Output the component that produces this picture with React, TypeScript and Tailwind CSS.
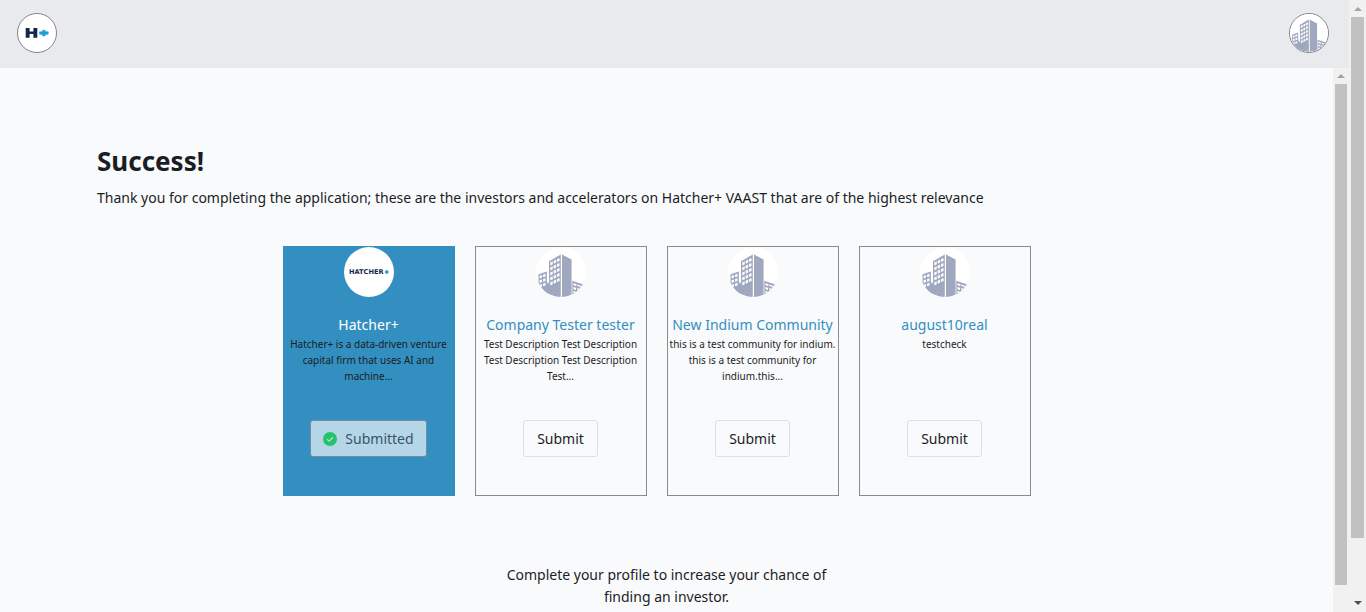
import React from "react";

type Investor = {
  name: string;
  description: string;
  submitted?: boolean;
};

const investors: Investor[] = [
  {
    name: "Hatcher+",
    description: "Hatcher+ is a data-driven venture capital firm that uses AI and machine...",
    submitted: true,
  },
  {
    name: "Company Tester tester",
    description: "Test Description Test Description Test Description Test Description Test...",
  },
  {
    name: "New Indium Community",
    description: "this is a test community for indium. this is a test community for indium.this...",
  },
  { name: "august10real", description: "testcheck" },
];

const towerRows = [0, 1, 2, 3, 4];
const towerCols = [0, 1, 2];
const annexRows = [0, 1, 2];
const annexCols = [0, 1];

function BuildingIcon({ id, className }: { id: string; className: string }) {
  return (
    <svg viewBox="0 0 50 50" className={className} aria-hidden="true">
      <clipPath id={id}>
        <circle cx="25" cy="25" r="25" />
      </clipPath>
      <circle cx="25" cy="25" r="25" fill="#fff" />
      <g clipPath={`url(#${id})`}>
        <g fill="#a0a8bf">
          <path d="M13 14.2 24.8 7.4V50H8V40l5-1.500z" />
          <path d="M26 7.400 35.600 12.400V50H26z" />
          <path d="M2.500 27.300 10.900 24.500V34.500L13.200 36.500V50L2.500 42z" />
          <path d="M36.300 33.800 47.400 37.400 46 39.600 44.500 39.300V43L36.300 50z" />
        </g>
        <g fill="#fff">
          {towerRows.map((r) =>
            towerCols.map((c) => {
              const x = 14.3 + c * 3.4;
              const y = 15.5 + r * 5 - c * 1.7;
              return <path key={`${r}-${c}`} d={`M${x} ${y}l2.400-1.200v3l-2.400 1.200z`} />;
            }),
          )}
          {annexRows.map((r) =>
            annexCols.map((c) => {
              const x = 3.6 + c * 3.5;
              const y = 28.7 + r * 4.5 - c * 1.2;
              return <path key={`${r}-${c}`} d={`M${x} ${y}l2.400-.8v2.700l-2.400.8z`} />;
            }),
          )}
          <path d="M11.300 24v11.500l1.300 1V24z" />
          <path d="M37.400 36.200l3 .9v2l-3-.9zM41.400 37.400l3.200 1v1.500l-3.200-.9zM37.400 40l2.600.8v2.200l-2.600-.8zM41.200 41l2.300.7v2l-2.300-.7zM37.400 44l2.600.8v2l-2.600-.8z" />
        </g>
      </g>
    </svg>
  );
}

function HatcherMark() {
  return (
    <svg viewBox="0 0 40 40" className="size-10" aria-hidden="true">
      <circle cx="20" cy="20" r="19.500" fill="#fff" stroke="#858689" />
      <path d="M8.700 15h3.900v3.400h3.800V15h3.900v9.700h-3.900v-3.600h-3.800v3.600H8.700z" fill="#14264a" />
      <path
        d="M25.600 17.200h2.600v1.600h3v2.500h-3v1.600h-2.600v-1.600h-3v-2.500h3z"
        fill="#1b9ddb"
        stroke="#1b9ddb"
        strokeWidth="0.600"
        strokeLinejoin="round"
      />
    </svg>
  );
}

function HatcherLogo() {
  return (
    <div className="flex size-[50px] items-center justify-center rounded-full bg-white">
      <svg viewBox="0 0 40 8" className="h-2 w-10" role="img" aria-label="Hatcher+">
        <text
          x="0"
          y="6"
          fontFamily="'DejaVu Sans', sans-serif"
          fontWeight="700"
          fontSize="6.600"
          fill="#14264a"
        >
          HATCHER
        </text>
        <path d="M36.900 2h1.600v1.200h1.200v1.600h-1.200V6h-1.600V4.800h-1.200V3.200h1.200z" fill="#1b9ddb" />
      </svg>
    </div>
  );
}

function CheckIcon() {
  return (
    <svg viewBox="0 0 14 14" className="size-3.5" aria-hidden="true">
      <circle cx="7" cy="7" r="7" fill="#22c36b" />
      <path d="M4 7.200 6.200 9.200 10 5.200" fill="none" stroke="#b5d6e7" strokeWidth="1.300" />
    </svg>
  );
}

function InvestorCard({ investor, index }: { investor: Investor; index: number }) {
  const { name, description, submitted } = investor;
  return (
    <article
      className={`flex h-[250px] w-[172px] flex-col items-center border text-center ${
        submitted ? "border-[#338fbf] bg-[#338fbf]" : "border-[#8a8b8d]"
      }`}
    >
      {submitted ? <HatcherLogo /> : <BuildingIcon id={`building-${index}`} className="size-[50px]" />}
      <h2
        className={`mt-4 whitespace-nowrap text-sm leading-6 ${
          submitted ? "text-white" : "text-[#338fbf]"
        }`}
      >
        {name}
      </h2>
      <p className="-mt-px h-21 text-[10px] leading-4">{description}</p>
      {submitted ? (
        <button
          type="button"
          disabled
          className="flex h-[37px] items-center gap-2 rounded-[3px] border border-[#708d9d] bg-[#b5d6e7] px-3 text-sm text-[#35556b]"
        >
          <CheckIcon />
          Submitted
        </button>
      ) : (
        <button type="button" className="h-[37px] rounded-[3px] border border-[#dee0e4] px-[13px] text-sm">
          Submit
        </button>
      )}
    </article>
  );
}

function ArrowUp() {
  return (
    <svg viewBox="0 0 16 16" className="size-4 shrink-0" aria-hidden="true">
      <path d="M4 10h8L8 6z" fill="#a3a3a3" />
    </svg>
  );
}

function ArrowDown() {
  return (
    <svg viewBox="0 0 16 16" className="size-4 shrink-0" aria-hidden="true">
      <path d="M4 5h8L8 9z" fill="#505050" />
    </svg>
  );
}

export default function App() {
  return (
    <div className="flex h-screen overflow-hidden bg-[#f9fafc] font-['Noto_Sans',sans-serif] text-[#1b1d26]">
      <div className="flex min-w-0 flex-1 flex-col">
        <header className="flex h-17 shrink-0 items-center justify-between border-b border-[#e6e7ea] bg-[#e9eaee] pr-5 pb-px pl-[17px]">
          <a href="#home" aria-label="Home">
            <HatcherMark />
          </a>
          <button
            type="button"
            aria-label="Account"
            className="size-10 overflow-hidden rounded-full border border-[#858689] bg-white"
          >
            <BuildingIcon id="building-account" className="size-full" />
          </button>
        </header>

        <div className="flex min-h-0 flex-1">
          <main className="min-w-0 flex-1 overflow-hidden px-[97px] pt-[75px]">
            <h1 className="text-[26px] leading-9 font-bold">Success!</h1>
            <p className="mt-2 text-sm leading-[22px]">
              Thank you for completing the application; these are the investors and accelerators on
              Hatcher+ VAAST that are of the highest relevance
            </p>
            <section className="mt-[37px] flex justify-center gap-5 pr-5" aria-label="Investors">
              {investors.map((investor, index) => (
                <InvestorCard key={investor.name} investor={investor} index={index} />
              ))}
            </section>
            <p className="mx-auto mt-17 max-w-[340px] text-center text-sm leading-[22px]">
              Complete your profile to increase your chance of finding an investor.
            </p>
          </main>
          <div className="flex w-4 shrink-0 flex-col items-center bg-[#f1f1f1]" aria-hidden="true">
            <ArrowUp />
            <div className="mb-[27px] w-3 flex-1 bg-[#c1c1c1]" />
          </div>
        </div>
      </div>

      <div className="flex w-[17px] shrink-0 flex-col items-center bg-[#f1f1f1] pt-px" aria-hidden="true">
        <ArrowUp />
        <div className="mb-[58px] w-[13px] flex-1 bg-[#c1c1c1]" />
        <ArrowDown />
      </div>
    </div>
  );
}
